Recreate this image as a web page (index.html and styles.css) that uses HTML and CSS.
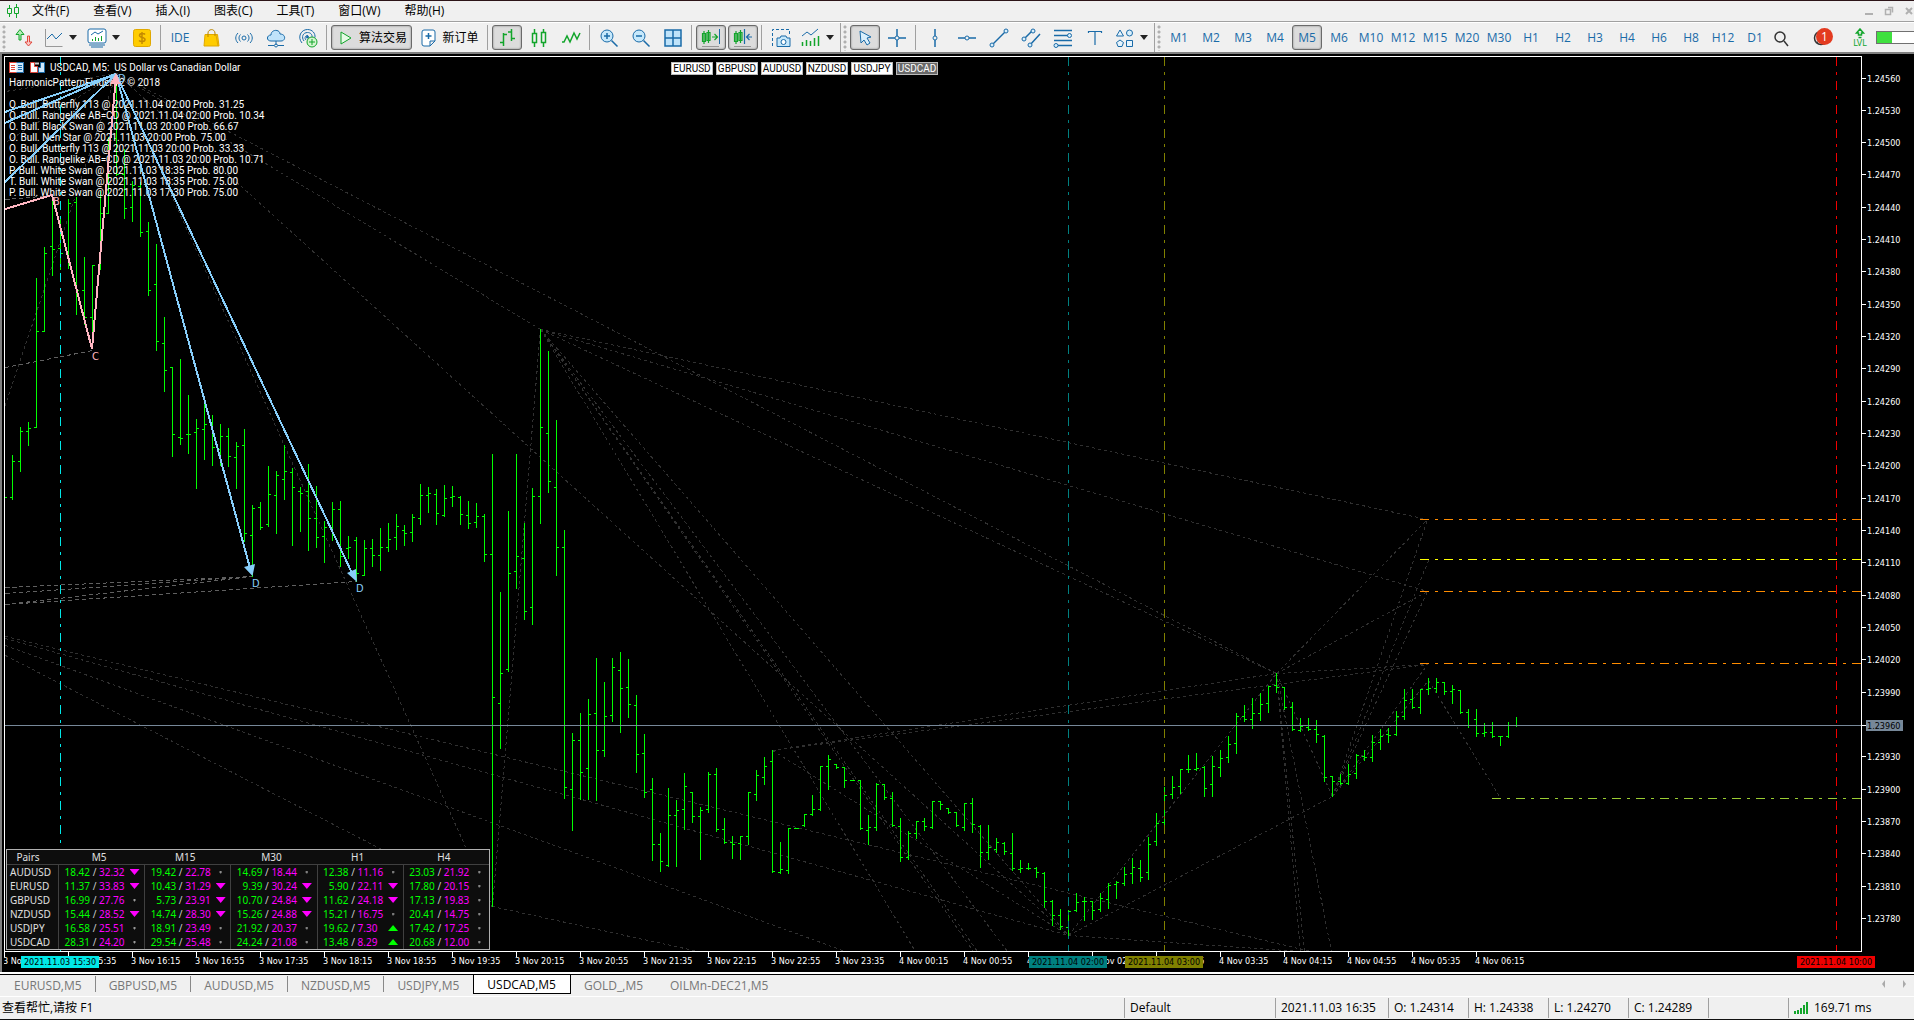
FILE: index.html
```html
<!DOCTYPE html>
<html lang="zh-CN">
<head>
<meta charset="utf-8">
<title>USDCAD, M5</title>
<link rel="stylesheet" href="styles.css">
</head>
<body>
<header class="menubar">
  <svg class="logo" width="14" height="14" viewBox="0 0 14 14"><path d="M3.500 1v3M3.500 10v3M10.500 0v3M10.500 10v4M1.500 4.500h4v5h-4zM8.500 3.500h4v6h-4z" class="g"/></svg>
  <nav class="menu">
    <button>文件(F)</button><button>查看(V)</button><button>插入(I)</button><button>图表(C)</button><button>工具(T)</button><button>窗口(W)</button><button>帮助(H)</button>
  </nav>
  <div class="winctl">
    <button aria-label="Minimize"><svg width="10" height="10" viewBox="0 0 10 10"><path d="M1 8h8" stroke-width="2"/></svg></button>
    <button aria-label="Restore"><svg width="10" height="10" viewBox="0 0 10 10"><path d="M1.500 3.500h5v5h-5zM4 1.500h4.500v5" stroke-width="1.500"/></svg></button>
    <button aria-label="Close"><svg width="10" height="10" viewBox="0 0 10 10"><path d="M2 2l6 6M8 2l-6 6" stroke-width="2"/></svg></button>
  </div>
</header>

<div class="toolbar">
  <div class="group">
    <span class="grip"></span>
    <button class="tool" aria-label="Trade"><svg viewBox="0 0 20 20"><path class="g" d="M5 12V6.500H2L6 1.500 10 6.500H7V12z" fill="#b6ecb9"/><path d="M13.500 8h2v6h2.500l-3.500 4-3.500-4h2.500z" fill="#fbc8c4" stroke="#e0473c"/></svg></button>
    <button class="tool drop" aria-label="Chart line"><svg viewBox="0 0 20 20"><path d="M1.500 1v17.500h17" stroke="#999"/><path class="b" d="M3 11l5-5 4 5 6-6"/></svg><i></i></button>
    <button class="tool drop" aria-label="Indicators"><svg viewBox="0 0 20 20"><rect class="b" x="1" y="1" width="18" height="14" rx="2" fill="#fff"/><path class="b" d="M4 7l4-3 3 2 5-3M2 17h16M4 19h12"/><path d="M5.500 13v-2M8.500 13V9M11.500 13v-3M14.500 13V8" class="g"/></svg><i></i></button>
    <button class="tool" aria-label="Market"><svg viewBox="0 0 20 20"><rect x="1.500" y="1.500" width="17" height="17" rx="2" fill="#ffcc00" stroke="#e0a800"/><path d="M13 6.500c-1-1.500-5.500-1.500-5.500 1s5.500 1.500 5.500 4-4.500 2.500-6 1M10 4v12" stroke="#c48a00" stroke-width="1.500"/></svg></button>
    <span class="sep"></span>
    <button class="tool">IDE</button>
    <button class="tool" aria-label="Shop"><svg viewBox="0 0 20 20"><path d="M3 6.500h12.500L17 18H2z" fill="#ffcc00" stroke="#e0a800"/><path d="M6 9V5c0-4 6.500-5 7 0v3" stroke="#b98500"/><path d="M14 7l2 11" stroke="#e0a800"/></svg></button>
    <button class="tool" aria-label="Signals"><svg viewBox="0 0 20 20"><circle class="b" cx="10" cy="10" r="2"/><path class="b" d="M6.500 6.500c-2 2-2 5 0 7M13.500 6.500c2 2 2 5 0 7M4 5c-3 3-3 7 0 10M16 5c3 3 3 7 0 10"/></svg></button>
    <button class="tool" aria-label="Cloud"><svg viewBox="0 0 20 20"><path class="b" d="M5 13c-5 0-4.500-6 0-6 0-6 9-6 9-1 6 0 6 7 1 7zM10 13v4M2 17.500h6M12 17.500h6" fill="#bfe3fa"/><circle class="b" cx="10" cy="17.500" r="1.500"/></svg></button>
    <button class="tool" aria-label="Hosting"><svg viewBox="0 0 20 20"><path class="b" d="M4 15C-1 9 3 1.500 9.500 1.500c5 0 8 4 7.500 8M6 13C3 9 5 4.500 9.500 4.500c3 0 5 2 4.500 5M8 12c-2-2-.5-5 2-4.500"/><circle cx="9.500" cy="9" r="1.500" fill="#1a6ba8"/><circle class="g" cx="14" cy="14" r="5" fill="#d4f5d0"/><path class="g" d="M14 11v6M11 14h6"/></svg></button>
    <span class="sep"></span>
    <button class="tool on algo"><svg viewBox="0 0 20 20"><path class="g" d="M5 4l10 6-10 6z" fill="#e6fbe6"/></svg>算法交易</button>
    <button class="tool order"><svg viewBox="0 0 20 20"><path class="b" d="M5 2h9q2 0 2 2v9l-5 5H5q-2 0-2-2V4q0-2 2-2zM16 13h-5v5" fill="#fff"/><path class="b" d="M9.500 5v6M6.500 8h6" stroke-width="1.500"/></svg>新订单</button>
    <span class="sep"></span>
    <button class="tool on" aria-label="Bars"><svg viewBox="0 0 20 20"><path class="g" stroke-width="1.500" d="M6.500 5v13M3 14.500h3.500M6.500 6.500H10M14.500 1v12M11 4h3.500M14.500 10.500H18"/></svg></button>
    <button class="tool" aria-label="Candles"><svg viewBox="0 0 20 20"><path class="g" d="M5.500 1v4M5.500 15v4M14.500 1v3M14.500 15v4M3.500 5.500h4v9h-4zM12.500 4.500h4v10h-4z" stroke-width="1.500"/></svg></button>
    <button class="tool" aria-label="Line"><svg viewBox="0 0 20 20"><path class="g" stroke-width="1.500" d="M1 14h2l3-6 3 6 4-9 3 6 3-6"/></svg></button>
    <span class="sep"></span>
    <button class="tool" aria-label="Zoom in"><svg viewBox="0 0 20 20"><circle class="b" cx="8" cy="8" r="6" fill="#c6e8fb"/><path class="b" d="M12.500 12.500l6 6M8 5v6M5 8h6" stroke-width="1.500"/></svg></button>
    <button class="tool" aria-label="Zoom out"><svg viewBox="0 0 20 20"><circle class="b" cx="8" cy="8" r="6" fill="#c6e8fb"/><path class="b" d="M12.500 12.500l6 6M5 8h6" stroke-width="1.500"/></svg></button>
    <button class="tool" aria-label="Tile"><svg viewBox="0 0 20 20"><path class="b" d="M2 2h16v16H2zM10 2v16M2 10h16" fill="#bfe3fa" stroke-width="1.500"/></svg></button>
    <span class="sep"></span>
    <button class="tool on" aria-label="Auto scroll"><svg viewBox="0 0 20 20"><path class="g" d="M3 3v13M7.500 2v13M1.500 5.500h3v8h-3zM6 4.500h3v8H6zM11 9h5M13.500 6l3 3-3 3" stroke-width="1.200"/><path class="b" d="M18.500 1v15"/><path d="M1 18.500h17" stroke="#999"/></svg></button>
    <button class="tool on" aria-label="Chart shift"><svg viewBox="0 0 20 20"><path class="g" d="M3 3v13M7.500 2v13M1.500 5.500h3v8h-3zM6 4.500h3v8H6z" stroke-width="1.200"/><path class="b" d="M11.500 1v15M19 9h-5M16.500 6l-3 3 3 3" stroke-width="1.200"/><path d="M1 18.500h17" stroke="#999"/></svg></button>
    <span class="sep"></span>
    <button class="tool" aria-label="Screenshot"><svg viewBox="0 0 20 20"><path class="b" d="M1.500 18V1.500h17V7" stroke-dasharray="3 2"/><path class="b" d="M6 10h3l1-2h5l1 2h3v8.500H6z" fill="#c6e8fb"/><circle class="b" cx="12.500" cy="14" r="2.500" fill="#fff"/></svg></button>
    <button class="tool drop" aria-label="Templates"><svg viewBox="0 0 20 20"><path class="b" d="M1 8l5-4 4 3 7-6"/><path class="g" d="M1.500 18v-4M5.500 18v-6M9.500 18v-5M13.500 18v-8M17.500 18V8" stroke-width="1.500"/></svg><i></i></button>
  </div>
  <div class="group">
    <span class="grip"></span>
    <button class="tool on" aria-label="Cursor"><svg viewBox="0 0 20 20"><path class="b" d="M5 3l1 12 3-3 3 5 3-2-3-5 4-1z" fill="#d9effc"/></svg></button>
    <button class="tool" aria-label="Crosshair"><svg viewBox="0 0 20 20"><path class="b" d="M10 1v7M10 12v7M1 10h7M12 10h7" stroke-width="1.500"/><circle class="b" cx="10" cy="10" r="2"/></svg></button>
    <span class="sep"></span>
    <button class="tool" aria-label="Vertical line"><svg viewBox="0 0 20 20"><path class="b" d="M10 1v7M10 12v7" stroke-width="1.500"/><circle class="b" cx="10" cy="10" r="2"/></svg></button>
    <button class="tool" aria-label="Horizontal line"><svg viewBox="0 0 20 20"><path class="b" d="M1 10h7M12 10h7" stroke-width="1.500"/><circle class="b" cx="10" cy="10" r="2"/></svg></button>
    <button class="tool" aria-label="Trend line"><svg viewBox="0 0 20 20"><path class="b" d="M4 16L16 4" stroke-width="1.500"/><circle class="k" cx="3" cy="17" r="2"/><circle class="k" cx="17" cy="3" r="2"/></svg></button>
    <button class="tool" aria-label="Channel"><svg viewBox="0 0 20 20"><path class="b" d="M3 11l9-9M9 17L19 6" stroke-width="1.500"/><circle class="k" cx="3" cy="11" r="2"/><circle class="k" cx="12" cy="3" r="2"/><circle class="k" cx="9" cy="17" r="2"/></svg></button>
    <button class="tool" aria-label="Fibonacci"><svg viewBox="0 0 20 20"><path class="b" d="M1 2.500h18M1 7.500h14M1 12.500h18M5 17.500h14" stroke-width="1.500"/><circle class="k" cx="16.500" cy="7.500" r="2"/><circle class="k" cx="3" cy="17.500" r="2"/></svg></button>
    <button class="tool" aria-label="Text"><svg viewBox="0 0 20 20"><path class="b" d="M3.500 5V3.500h13V5M10 3.500V17" stroke-width="1.200"/></svg></button>
    <button class="tool drop" aria-label="Shapes"><svg viewBox="0 0 20 20"><path class="b" d="M5 2l3.500 6h-7zM11.500 12.500h6v6h-6zM5 12l3.500 2.500L7 18.500H3L1.500 14.500z" fill="#e6f4fd"/><circle class="k" cx="14.500" cy="5" r="3"/></svg><i></i></button>
  </div>
  <div class="group last">
    <span class="grip"></span>
    <button class="tool">M1</button><button class="tool">M2</button><button class="tool">M3</button><button class="tool">M4</button><button class="tool on">M5</button><button class="tool">M6</button><button class="tool">M10</button><button class="tool">M12</button><button class="tool">M15</button><button class="tool">M20</button><button class="tool">M30</button><button class="tool">H1</button><button class="tool">H2</button><button class="tool">H3</button><button class="tool">H4</button><button class="tool">H6</button><button class="tool">H8</button><button class="tool">H12</button><button class="tool">D1</button>
  </div>
  <div class="right">
    <button class="tool small" aria-label="Search"><svg viewBox="0 0 20 20"><circle cx="9" cy="9" r="5" stroke="#333" stroke-width="1.500"/><path d="M13 13l4 5" stroke="#333" stroke-width="1.500"/></svg></button>
    <button class="tool account" aria-label="Notifications"><svg viewBox="0 0 20 20"><circle cx="9" cy="10" r="6.500" stroke="#333" stroke-width="1.500"/><circle cx="9" cy="8" r="2" stroke="#333"/><path d="M5 15c1-4 7-4 8 0" stroke="#333"/></svg><b>1</b></button>
    <div class="level"><svg width="12" height="11" viewBox="0 0 12 11"><path class="g" stroke-width="1.500" d="M6 1L2.500 5h2v2h3V5h2zM4.500 9.500h3"/></svg><span>LVL</span></div>
    <meter class="battery" min="0" max="100" value="32" aria-label="Level"></meter>
  </div>
</div>

<main class="chart">
  <div class="plot">
    <svg class="canvas" id="plot"></svg>
    <div class="caption">
      <svg width="36" height="12" viewBox="0 0 36 12"><rect x=".5" y=".5" width="14" height="10" fill="#fff" stroke="#e0473c"/><path d="M7.500 .5h7v10h-7" fill="#cfe8fb" stroke="#1a6ba8"/><path d="M2 3.500h4M2 5.500h4M2 7.500h4" stroke="#e0473c"/><path d="M9 3.500h4M9 5.500h4M9 7.500h4" stroke="#1a6ba8"/><path d="M21.500 .5h4v4h3v6h-7z" fill="#fff" stroke="#e0473c"/><path d="M35.500 .5h-4v5h-2v5h6z" fill="#cfe8fb" stroke="#1a6ba8"/><path d="M26 1.500h4" stroke="#ccc" stroke-width="2"/></svg>
      <h1>USDCAD, M5:&nbsp; US Dollar vs Canadian Dollar</h1>
    </div>
    <div class="notes">
      <p>HarmonicPatternFinderV2 © 2018</p>
      <ul>
        <li>O. Bull. Butterfly 113 @ 2021.11.04 02:00 Prob. 31.25</li>
        <li>O. Bull. Rangelike AB=CD @ 2021.11.04 02:00 Prob. 10.34</li>
        <li>O. Bull. Black Swan @ 2021.11.03 20:00 Prob. 66.67</li>
        <li>O. Bull. Nen Star @ 2021.11.03 20:00 Prob. 75.00</li>
        <li>O. Bull. Butterfly 113 @ 2021.11.03 20:00 Prob. 33.33</li>
        <li>O. Bull. Rangelike AB=CD @ 2021.11.03 20:00 Prob. 10.71</li>
        <li>P. Bull. White Swan @ 2021.11.03 18:35 Prob. 80.00</li>
        <li>T. Bull. White Swan @ 2021.11.03 18:35 Prob. 75.00</li>
        <li>P. Bull. White Swan @ 2021.11.03 17:30 Prob. 75.00</li>
      </ul>
    </div>
    <svg class="canvas" id="patterns"></svg>
    <div class="symbols">
      <button>EURUSD</button><button>GBPUSD</button><button>AUDUSD</button><button>NZDUSD</button><button>USDJPY</button><button class="current">USDCAD</button>
    </div>
    <table class="pairs">
      <thead><tr><th>Pairs</th><th>M5</th><th>M15</th><th>M30</th><th>H1</th><th>H4</th></tr></thead>
      <tbody id="pairs"></tbody>
    </table>
  </div>
  <svg class="prices" id="prices"></svg>
  <svg class="times" id="times"></svg>
</main>

<nav class="tabs">
  <a href="#">EURUSD,M5</a><a href="#">GBPUSD,M5</a><a href="#">AUDUSD,M5</a><a href="#">NZDUSD,M5</a><a href="#">USDJPY,M5</a><a href="#" class="active">USDCAD,M5</a><a href="#">GOLD_,M5</a><a href="#">OILMn-DEC21,M5</a>
  <div class="scroll"><i class="prev"></i><i class="next"></i></div>
</nav>
<footer class="status">
  <span class="help">查看帮忙,请按 F1</span>
  <span class="profile">Default</span>
  <span class="stamp">2021.11.03 16:35</span>
  <span>O: 1.24314</span><span>H: 1.24338</span><span>L: 1.24270</span><span>C: 1.24289</span><span></span>
  <span class="ping"><svg width="14" height="12" viewBox="0 0 14 12"><path class="g" d="M1 12V9M4 12V8M7 12V6M10 12V3M13 12V0" stroke-width="2"/></svg>169.71 ms</span>
</footer>
<script src="chart.js"></script>
</body>
</html>
```
FILE: styles.css
```css
* { box-sizing: border-box; }
body {
  margin: 0; height: 100vh; display: flex; flex-direction: column; overflow: hidden;
  background: #f0f0f0; color: #000; border-top: 1px solid #2c1418; border-bottom: 1px solid #111;
  font: 12px/16px "Open Sans", "Noto Sans CJK SC", sans-serif;
}
button { font: inherit; color: inherit; background: none; border: 0; padding: 0; margin: 0; white-space: nowrap; }
svg { fill: none; flex: none; }
.g { stroke: #12a52b; }
.b { stroke: #1a6ba8; }
.k { stroke: #1a6ba8; fill: #d9effc; }

.menubar { display: flex; align-items: center; height: 21px; flex: none; padding-left: 6px; border-bottom: 1px solid #a0a0a0; }
.menu { display: flex; gap: 24px; margin-left: 12px; flex: 1; }
.winctl { display: flex; gap: 10px; padding-right: 0; }
.winctl svg { display: block; stroke: #b0b0b0; }

.toolbar { display: flex; flex: none; height: 32px; border-top: 1px solid #fff; border-bottom: 2px solid #808080; color: #1a6ba8; }
.group { display: flex; align-items: center; gap: 2px; padding-right: 1px; border-right: 1px solid #a0a0a0; }
.group.last { border: 0; }
.grip { width: 5px; height: 26px; margin: 0 0 0 2px; background: radial-gradient(circle at 2px 2px, #b0b0b0 1px, transparent 2px) 0 0 / 5px 5px; }
.tool { display: flex; align-items: center; justify-content: center; width: 30px; height: 25px; border: 1px solid transparent; border-radius: 3px; }
.tool svg { width: 20px; height: 20px; }
.tool.on { border-color: #6a6a6a; background: #dcdcdc; box-shadow: inset 0 0 2px #777; }
.tool.drop { width: 41px; justify-content: flex-start; padding-left: 2px; gap: 5px; }
.drop i { border: 4px solid transparent; border-top: 5px solid #222; border-bottom: 0; }
.algo { width: 81px; color: #000; gap: 3px; }
.order { width: 70px; color: #000; gap: 3px; }
.sep { width: 1px; height: 25px; margin: 0 2px 0 1px; background: #a0a0a0; }
.right { display: flex; align-items: center; flex: 1; justify-content: flex-end; }
.tool.small { width: 20px; margin-right: 16px; }
.account { position: relative; margin-right: 10px; }
.account b { position: absolute; right: 3px; top: 2px; width: 17px; height: 17px; border-radius: 9px; background: #e33b20; color: #fff; font-weight: 400; line-height: 17px; }
.level { display: flex; flex-direction: column; align-items: center; width: 26px; color: #12a52b; font: 8px/9px "DejaVu Sans", sans-serif; }
.battery { width: 49px; height: 13px; margin-left: 3px; appearance: none; border: 1px solid #707070; border-right: 0; background: linear-gradient(90deg, #3fe03f 32%, #fff 32%); display: block; }
.battery::-webkit-meter-inner-element { display: none; }

.chart {
  flex: 1; min-height: 0; display: grid; grid-template: 1fr 20px / 1fr 52px;
  background: #000; border-left: 2px solid #808080; padding: 2px 0 0 2px; color: #fff;
  font: 9px/11px "DejaVu Sans Condensed", "DejaVu Sans", sans-serif;
}
.plot { position: relative; border: 1px solid #fff; overflow: hidden; min-height: 0; }
.canvas { position: absolute; inset: 0; width: 100%; height: 100%; }
.prices, .times { width: 100%; height: 100%; }
.times { grid-column: 1 / 3; }
.chart text { fill: #fff; }
.caption { position: absolute; left: 4px; top: 4px; display: flex; gap: 5px; align-items: center; font: 10px/14px Roboto, sans-serif; }
.caption h1 { margin: 0; font: inherit; }
.notes { position: absolute; left: 4px; top: 20px; font: 10px/11px Roboto, sans-serif; }
.notes p { margin: 0; }
.notes ul { margin: 11px 0 0; padding: 0; list-style: none; }
.symbols { position: absolute; left: 666px; top: 5px; display: flex; gap: 3px; }
.symbols button { width: 42px; height: 13px; background: #fff; color: #000; border: 1px solid #bbb; font: 10px/11px Roboto, sans-serif; }
.symbols .current { background: #696969; color: #fff; }

.crisp { shape-rendering: crispEdges; }
.bars { stroke: #0f0; }
.faint { stroke: #303030; stroke-dasharray: 3 3; }
.guide { stroke: #606060; stroke-dasharray: 4 3; }
.dashdot { stroke-dasharray: 9 6 3 6; }
.bull { stroke: #87cefa; stroke-width: 2; }
.bull-fill { fill: #87cefa; }
.pink { stroke: #ffb6c1; stroke-width: 2; }
.pink-fill { fill: #ffb6c1; }
.chart .mark { font-size: 11px; }
.chart text.bull-text { fill: #87cefa; }
.chart text.pink-text { fill: #ffb6c1; }
.chart text.dark { fill: #000; }
.axis { stroke: #fff; }

.pairs { position: absolute; left: 1px; bottom: 1px; width: 484px; table-layout: fixed; border-collapse: separate; border-spacing: 0; background: #0d0d0d; border: 1px solid #b0b0b0; font: 10px/14px "Noto Sans", sans-serif; }
.pairs th { padding: 0; height: 14px; font-weight: 400; color: #e0e0e0; border-bottom: 1px solid #404040; }
.pairs th:first-child { width: 51px; }
.pairs thead th:first-child { padding-right: 9px; }
.pairs thead th + th { padding-right: 4px; }
.pairs tbody th { text-align: left; padding-left: 3px; border: 0; }
.pairs td { padding: 0; height: 14px; border-left: 1px solid #404040; }
.cell { display: grid; grid-template-columns: 31px 9px 28px 15px; text-align: center; color: #ccc; }
.cell .plus { text-align: right; color: #0f0; }
.cell .minus { text-align: left; color: #f0f; }
.cell i { justify-self: center; align-self: center; width: 3px; height: 3px; background: #999; clip-path: polygon(33% 0, 66% 0, 66% 33%, 100% 33%, 100% 66%, 66% 66%, 66% 100%, 33% 100%, 33% 66%, 0 66%, 0 33%, 33% 33%); }
.cell i.down, .cell i.up { width: 10px; height: 6px; background: #f0f; clip-path: polygon(0 0, 100% 0, 50% 100%); }
.cell i.up { background: #0f0; clip-path: polygon(0 100%, 100% 100%, 50% 0); }

.tabs { display: flex; flex: none; height: 25px; padding: 0 0 2px 1px; border-top: 2px solid #fff; box-shadow: inset 0 1px #000; border-bottom: 1px solid #fff; align-items: stretch; }
.tabs a { padding: 0 14px 0 13px; line-height: 23px; color: #777; text-decoration: none; background: linear-gradient(#888, #888) 100% 60% / 1px 16px no-repeat; }
.tabs a.active { background: #fff; color: #000; border: 1px solid #000; line-height: 20px; }
.tabs a:nth-child(5), .tabs a:nth-child(7), .tabs a:nth-child(8) { background: none; }
.scroll { margin-left: auto; display: flex; gap: 18px; align-items: center; padding-right: 8px; }
.scroll i { border: 4px solid transparent; border-width: 4px 3px; }
.scroll .prev { border-right-color: #aaa; border-left: 0; }
.scroll .next { border-left-color: #aaa; border-right: 0; }

.status { display: flex; flex: none; height: 22px; padding: 1px 0; line-height: 20px; }
.status span { width: 80px; padding-left: 5px; border-left: 1px solid #a0a0a0; white-space: nowrap; }
.status .help { flex: 1; border: 0; padding-left: 2px; }
.status .profile { width: 151px; }
.status .stamp { width: 113px; }
.status .ping { width: 126px; display: flex; gap: 6px; align-items: center; }
```
FILE: chart.js
```js
// Bars: [high, low, open, close] in chart units, one every 8 units from x = 4.
const bars = [
[497,497,497,497],[455,499,497,461],[427,471,461,431],[422,445,431,428],[278,427,427,331],[247,331,331,253],[197,275,246,249],[217,269,248,253],
[199,268,254,203],[197,314,202,290],[257,324,290,317],[265,337,317,265],[191,269,264,213],[137,213,213,138],[83,175,138,174],[149,218,174,208],
[181,221,207,185],[182,236,186,232],[222,295,231,290],[244,350,284,341],[317,391,343,370],[367,456,367,434],[359,444,437,438],[395,453,434,434],
[419,488,432,428],[403,459,429,424],[415,465,424,447],[424,465,449,436],[428,466,436,456],[442,488,457,446],[429,541,445,533],[505,576,535,508],
[502,529,507,527],[466,526,524,494],[471,533,495,475],[445,499,479,471],[468,545,472,487],[487,531,491,493],[464,550,491,518],[486,547,518,537],
[521,562,536,527],[502,540,527,509],[501,566,509,556],[536,558,548,547],[537,581,540,573],[540,575,575,548],[539,566,548,555],[528,570,555,547],
[523,551,547,539],[514,549,537,526],[525,545,530,533],[514,541,532,517],[484,524,518,495],[487,512,495,493],[489,524,494,513],[485,516,515,498],
[486,506,497,496],[496,524,497,514],[501,528,515,523],[503,527,522,516],[514,561,516,554],[454,906,554,697],[592,748,703,673],[511,671,669,573],
[454,588,571,556],[523,619,558,611],[488,624,607,496],[329,523,496,427],[351,492,433,481],[420,575,487,547],[530,798,547,787],[733,830,789,740],
[713,799,740,772],[699,799,768,714],[658,800,713,750],[682,756,750,716],[658,721,715,667],[652,732,670,688],[659,717,687,704],[695,772,705,754],
[734,797,753,792],[778,860,789,844],[833,871,844,861],[788,866,865,815],[800,866,815,810],[773,829,809,786],[792,822,792,816],[807,859,816,810],
[772,812,809,774],[768,831,774,829],[818,843,829,842],[836,858,842,844],[836,859,843,836],[792,844,836,792],[770,800,794,775],[757,784,777,766],
[750,872,761,871],[842,873,872,869],[828,873,870,828],[828,828,828,828],[814,826,825,814],[795,815,814,809],[766,810,809,766],[755,789,766,759],
[764,768,764,767],[767,787,767,780],[780,780,780,780],[780,829,780,828],[815,844,830,827],[783,830,827,784],[784,799,784,797],[792,826,798,825],
[818,861,826,857],[831,859,857,833],[821,838,833,821],[818,830,821,826],[801,828,827,801],[801,809,801,804],[808,813,808,812],[812,826,812,825],
[803,830,827,803],[798,832,803,824],[825,867,826,852],[825,859,852,847],[838,852,849,842],[842,854,843,851],[833,870,853,868],[860,872,869,868],
[863,869,868,868],[867,877,868,872],[872,907,873,901],[900,925,901,915],[909,929,915,926],[910,936,927,911],[893,911,910,902],[897,920,901,901],
[901,919,901,910],[893,911,909,898],[883,908,899,885],[881,898,884,882],[867,885,883,874],[858,883,873,867],[860,881,868,877],[837,879,872,844],
[813,845,841,823],[787,824,822,795],[776,798,794,787],[769,793,786,769],[755,772,769,769],[753,770,769,768],[766,796,767,788],[756,796,784,766],
[750,776,767,758],[736,762,757,744],[713,753,743,716],[705,721,716,719],[698,728,719,713],[693,720,713,704],[686,712,703,686],[673,692,685,687],
[687,709,687,707],[702,730,707,729],[718,731,730,726],[718,730,727,729],[720,742,729,734],[735,781,736,777],[776,796,776,781],[774,784,781,783],
[764,784,783,774],[754,778,773,755],[750,760,756,757],[735,761,757,742],[729,749,742,736],[728,742,734,735],[711,735,734,716],[689,719,716,700],
[689,708,699,707],[689,713,707,689],[678,694,689,688],[678,692,688,682],[682,694,682,691],[685,703,691,689],[690,713,690,712],[709,727,712,725],
[709,736,719,733],[723,736,733,732],[722,737,732,736],[736,745,736,736],[722,737,736,725],[717,726,725,725]
];

// Harmonic pattern legs: x1, y1, x2, y2.
const faint = [
[116,73,540,329],[116,73,1276,673],[116,73,1068,935],[116,73,492,906],[116,73,4,407],[116,73,5,91],[116,73,5,142],
[5,636,1310,951],[5,638,1068,935],[5,645,845,951],[5,655,492,906],[492,906,698,951],[492,906,540,329],
[540,329,1427,519],[540,329,1427,591],[540,329,1276,673],[540,329,915,951],[540,329,973,951],[540,329,977,951],[540,329,1007,951],[540,329,1068,935],
[772,750,1276,673],[772,750,1427,664],[1276,673,1427,664],[772,750,1068,935],[1068,935,1276,673],[1068,935,1332,796],[1068,935,1300,951],
[1276,673,1332,796],[1276,673,1427,519],[1276,673,1427,591],[1276,673,1300,951],[1276,673,1304,951],[1276,673,1331,951],
[1332,796,1427,519],[1332,796,1428,560],[1332,796,1427,591],[1332,796,1427,664],[1332,796,1428,680],[1428,680,1499,796]
];
const guides = [[5,587,252,576],[5,593,252,576],[5,604,252,576],[5,604,356,581],[5,367,92,350],[5,199,52,195]];

const path = (cls, d) => `<path class="${cls}" d="${d}"/>`;
const legs = list => list.map(([a, b, c, d]) => `M${a + .5} ${b + .5}L${c + .5} ${d + .5}`).join("");
const flat = list => list.map(l => path("crisp faint", legs([l]))).join("");

const barPath = bars.map(([h, l, o, c], i) => {
  const x = 4 + i * 8;
  return `M${x + .5} ${h}V${l + 1}M${x - 2} ${o + .5}h2M${x + 1} ${c + .5}h2`;
}).join("");

const stamps = [[60, "#00e8e8", "2021.11.03 15:30"], [1068, "#008080", "2021.11.04 02:00"], [1164, "#808000", "2021.11.04 03:00"], [1836, "#f00000", "2021.11.04 10:00"]];
const levels = [[519, 1420, "#ff8c00"], [559, 1420, "#ffff00"], [591, 1420, "#ff8c00"], [663, 1420, "#ff8c00"], [798, 1492, "#9acd32"]];

const rule = (x1, y1, x2, y2, color, cls = "") => `<line class="crisp ${cls}" x1="${x1}" y1="${y1}" x2="${x2}" y2="${y2}" stroke="${color}"/>`;

document.getElementById("plot").innerHTML =
  '<g transform="translate(-5 -57)">' + flat(faint) + path("crisp guide", legs(guides)) +
  path("crisp bars", barPath) + rule(5, 725.5, 4000, 725.5, "#778899") +
  levels.map(([y, x, c]) => rule(x, y + .5, 4000, y + .5, c, "dashdot")).join("") +
  stamps.map(([x, c]) => rule(x + .5, 57, x + .5, 4000, c, "dashdot")).join("") + "</g>";

document.getElementById("patterns").innerHTML =
  '<g transform="translate(-5 -57)">' +
  path("crisp bull", "M5 112L116 74L5 123M116 74L5 182M116 74L250 568M116 74L352 573") +
  path("bull-fill", "M244 567L255 564L252.500 576zM347 573L356 569L357 582z") +
  path("crisp pink", "M5 209L52 195L92 349L116 76") +
  path("pink-fill", "M110 84L121 84L116 73z") +
  '<text class="mark pink-text" x="53" y="205">B</text><text class="mark pink-text" x="92" y="360">C</text>' +
  '<text class="mark bull-text" x="118" y="82">D</text><text class="mark bull-text" x="252" y="587">D</text><text class="mark bull-text" x="356" y="592">D</text></g>';

// Price scale: 30 points per step.
let scale = "";
for (let i = 0; i <= 26; i++) {
  const y = Math.floor(78 + i * 32.33);
  if (i === 20) continue;
  scale += `<path class="crisp axis" d="M0 ${y + .5}h4"/><text x="5" y="${y + 4}">${((124560 - 30 * i) / 100000).toFixed(5)}</text>`;
}
document.getElementById("prices").innerHTML = `<g transform="translate(0 -56)">${scale}<path class="crisp axis" d="M0 725.500h4"/><rect x="4" y="720" width="37" height="11" fill="#778899"/><text class="dark" x="5" y="729">1.23960</text></g>`;

// Time scale: a label every 40 minutes.
let times = "";
for (let i = 0; i < 24; i++) {
  const x = 4 + i * 64, m = 14 * 60 + 55 + 40 * i, day = 3 + Math.floor(m / 1440);
  const hh = String(Math.floor(m / 60) % 24).padStart(2, "0"), mm = String(m % 60).padStart(2, "0");
  times += `<path class="crisp axis" d="M${x + .5} 0v5"/><text x="${x - 1}" y="12">${day} Nov ${hh}:${mm}</text>`;
}
times += stamps.map(([x, c, t]) => `<rect x="${x - 39}" y="4" width="78" height="12" fill="${c}"/><text class="dark" x="${x}" y="13" text-anchor="middle">${t}</text>`).join("");
document.getElementById("times").innerHTML = `<g transform="translate(-4 0)">${times}</g>`;

const pairs = {
  AUDUSD: ["18.42/32.32 down", "19.42/22.78", "14.69/18.44", "12.38/11.16", "23.03/21.92"],
  EURUSD: ["11.37/33.83 down", "10.43/31.29 down", "9.39/30.24 down", "5.90/22.11 down", "17.80/20.15"],
  GBPUSD: ["16.99/27.76", "5.73/23.91 down", "10.70/24.84 down", "11.62/24.18 down", "17.13/19.83"],
  NZDUSD: ["15.44/28.52 down", "14.74/28.30 down", "15.26/24.88 down", "15.21/16.75", "20.41/14.75"],
  USDJPY: ["16.58/25.51", "18.91/23.49", "21.92/20.37", "19.62/7.30 up", "17.42/17.25"],
  USDCAD: ["28.31/24.20", "29.54/25.48", "24.24/21.08", "13.48/8.29 up", "20.68/12.00"]
};
document.getElementById("pairs").innerHTML = Object.entries(pairs).map(([name, cells]) =>
  `<tr><th scope="row">${name}</th>` + cells.map(cell => {
    const [values, mark = ""] = cell.split(" "), [plus, minus] = values.split("/");
    return `<td><div class="cell"><span class="plus">${plus}</span><span>/</span><span class="minus">${minus}</span><i class="${mark}"></i></div></td>`;
  }).join("") + "</tr>").join("");
```
